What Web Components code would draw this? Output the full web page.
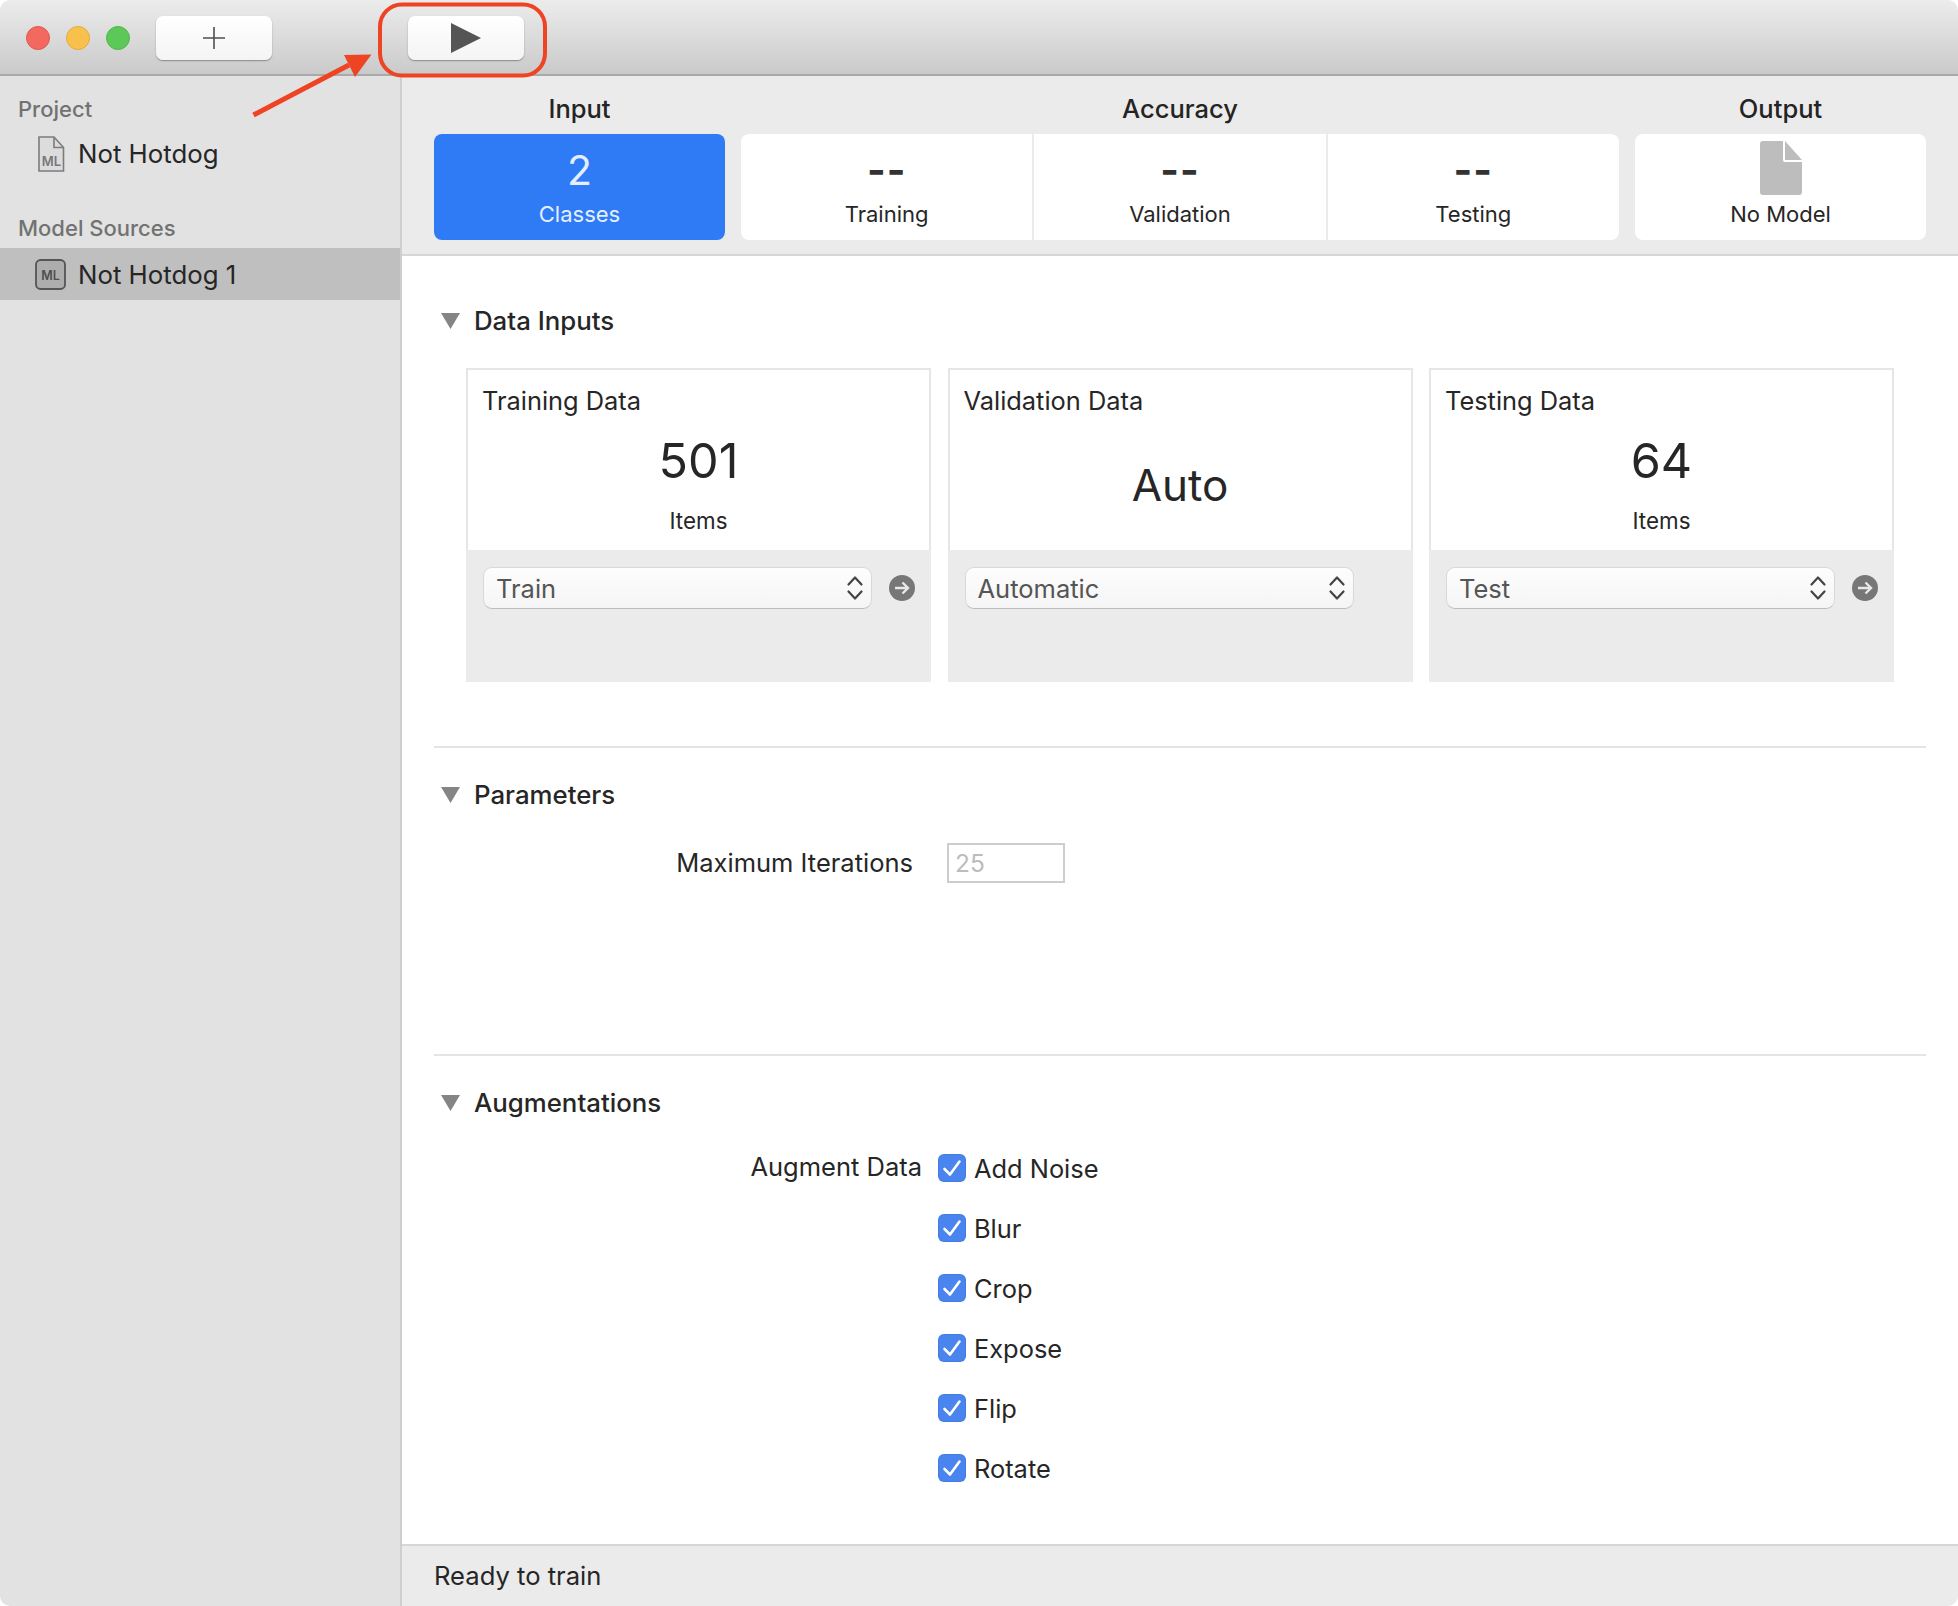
<!DOCTYPE html>
<html><head><meta charset="utf-8"><title>Create ML</title>
<style>
html,body{margin:0;padding:0;background:#fff}
body{font-family:Inter,"Noto Sans","Liberation Sans",sans-serif;color:#262626;width:1958px;height:1606px;overflow:hidden}
</style></head><body>
<app-window>
  <title-bar slot="top"></title-bar>
  <side-bar slot="side">
    <side-label>Project</side-label>
    <side-item icon="doc">Not Hotdog</side-item>
    <side-label style="margin:36px 0 7px">Model Sources</side-label>
    <side-item icon="model" selected>Not Hotdog 1</side-item>
  </side-bar>
  <summary-bar slot="summary"></summary-bar>
  <main-form slot="main">
    <form-section heading="Data Inputs" style="--sec-h:440px">
      <div style="display:grid;grid-template-columns:repeat(3,465px);column-gap:16.5px;margin:32px 0 0 32px">
        <data-card heading="Training Data" value="501" sub="Items" option="Train" go></data-card>
        <data-card heading="Validation Data" value="Auto" option="Automatic"></data-card>
        <data-card heading="Testing Data" value="64" sub="Items" option="Test" go></data-card>
      </div>
    </form-section>
    <form-section heading="Parameters" ruled style="--sec-h:308px">
      <form-row label="Maximum Iterations" style="--lw:479px;--gap:34px;margin-top:33px"><num-field>25</num-field></form-row>
    </form-section>
    <form-section heading="Augmentations" ruled style="--sec-h:489px">
      <form-row label="Augment Data" style="--lw:488px;--gap:16px;--lt:9px;margin-top:20px">
        <check-row>Add Noise</check-row>
        <check-row>Blur</check-row>
        <check-row>Crop</check-row>
        <check-row>Expose</check-row>
        <check-row>Flip</check-row>
        <check-row>Rotate</check-row>
      </form-row>
    </form-section>
  </main-form>
  <status-bar slot="status">Ready to train</status-bar>
  <call-out slot="over"></call-out>
</app-window>
<script>
function def(name, html){
  customElements.define(name, class extends HTMLElement{
    constructor(){super();this.attachShadow({mode:'open'});}
    connectedCallback(){
      const a=n=>this.getAttribute(n);
      this.shadowRoot.innerHTML = typeof html==='function'? html(a,this):html;
    }
  });
}
def('app-window',`<style>
:host{display:block;position:relative;width:1958px;height:1606px}
.win{width:100%;height:100%;display:flex;flex-direction:column;border-radius:10px;overflow:hidden}
.body{flex:1;display:flex;min-height:0}
.col{flex:1;display:flex;flex-direction:column;min-width:0}
</style><div class="win"><slot name="top"></slot><div class="body"><slot name="side"></slot>
<div class="col"><slot name="summary"></slot><slot name="main"></slot><slot name="status"></slot></div></div></div><slot name="over"></slot>`);

def('title-bar',`<style>
:host{display:flex;align-items:center;box-sizing:border-box;height:76px;flex:none;padding:2px 0 0 26px;
background:linear-gradient(#ececec,#cacaca);border-bottom:2px solid #a9a9a9}
.l{width:24px;height:24px;border-radius:50%;box-sizing:border-box;margin-right:16px;border:1px solid}
.b{box-sizing:border-box;width:116px;height:44px;border-radius:7px;background:linear-gradient(#fff,#f4f4f4);
box-shadow:0 1px 1.5px rgba(0,0,0,.35);display:flex;align-items:center;justify-content:center}
</style>
<span class="l" style="background:#f3695f;border-color:#e2574d"></span>
<span class="l" style="background:#f8c04d;border-color:#e6ab3a"></span>
<span class="l" style="background:#5cc858;border-color:#4fb84c;margin-right:0"></span>
<div class="b" style="margin-left:26px"><svg width="22" height="22" viewBox="0 0 22 22"><path d="M11 0V22M0 11H22" stroke="#4f4f4f" stroke-width="1.6" fill="none"/></svg></div>
<div class="b" style="margin-left:136px"><svg width="30" height="30" viewBox="0 0 30 30"><path d="M0 0L30 15L0 30Z" fill="#555"/></svg></div>`);

def('side-bar',`<style>
:host{display:block;box-sizing:border-box;width:402px;flex:none;background:#e2e2e2;border-right:2px solid #cfcfcf;padding-top:20px}
</style><slot></slot>`);
def('side-label',`<style>
:host{display:block;font-size:22px;line-height:26px;font-weight:500;color:#727272;padding-left:18px;margin-bottom:6px}
</style><slot></slot>`);
def('side-item',(a,el)=>{
 const sel=el.hasAttribute('selected');
 const icon=a('icon')==='doc'
 ?`<svg width="30" height="36" viewBox="0 0 30 36" style="margin-left:6px"><path d="M3 1H18L27.5 11.5V35H3Z" fill="#dcdcdc" stroke="#7c7c7c" stroke-width="1.6"/><path d="M18 1V11.5H27.5" fill="none" stroke="#7c7c7c" stroke-width="1.6"/><text x="15.5" y="30" text-anchor="middle" font-family="Inter,sans-serif" font-size="13" font-weight="600" fill="#777">ML</text></svg>`
 :`<svg width="32" height="31" viewBox="0 0 32 31" style="margin-left:5px"><rect x="1" y="1" width="29" height="29" rx="4.5" fill="#adadad" stroke="#555" stroke-width="1.8"/><text x="15.5" y="20.5" text-anchor="middle" font-family="Inter,sans-serif" font-size="12.5" font-weight="600" fill="#4f4f4f">ML</text></svg>`;
 return `<style>
:host{display:flex;align-items:center;height:${sel?52:51}px;box-sizing:border-box;padding-left:30px;font-size:25.8px;color:#262626;background:${sel?'#bfbfbf':'transparent'}}
.w{display:flex;align-items:center;width:48px;flex:none}
</style><span class="w">${icon}</span><slot></slot>`;
});

def('summary-bar',`<style>
:host{display:block;box-sizing:border-box;height:180px;flex:none;background:#ebebeb;border-bottom:2px solid #d6d6d6;padding:18px 32px 0}
.g{display:grid;grid-template-columns:291px 878px 291px;column-gap:16px}
h3{margin:0 0 10px;font-size:25.5px;line-height:30px;font-weight:500;text-align:center;color:#242424}
.c{height:106px;border-radius:8px;background:#fff;display:flex;overflow:hidden}
.blue{background:#2f7bf6;color:#e4eeff}
.cell{flex:1;display:flex;flex-direction:column;align-items:center;position:relative;box-sizing:border-box}
.cell+.cell{border-left:2px solid #ebebeb}
.n{font-size:41px;line-height:48px;margin-top:12px;height:48px}
.d{font-size:40px;line-height:48px;margin-top:12px;height:48px;font-weight:700;letter-spacing:1px;color:#333}
.s{font-size:22px;line-height:28px;position:absolute;top:66px;white-space:nowrap}
svg{margin-top:7px}
</style><div class="g">
<div><h3>Input</h3><div class="c blue"><div class="cell"><span class="n">2</span><span class="s">Classes</span></div></div></div>
<div><h3>Accuracy</h3><div class="c">
<div class="cell"><span class="d">--</span><span class="s">Training</span></div>
<div class="cell"><span class="d">--</span><span class="s">Validation</span></div>
<div class="cell"><span class="d">--</span><span class="s">Testing</span></div>
</div></div>
<div><h3>Output</h3><div class="c"><div class="cell">
<svg width="42" height="54" viewBox="0 0 42 54"><path d="M3 0H23V19Q23 21 25 21H42V51Q42 54 39 54H3Q0 54 0 51V3Q0 0 3 0Z" fill="#bdbdbd"/><path d="M25 0L42 19H25Z" fill="#bdbdbd"/></svg>
<span class="s">No Model</span></div></div></div>
</div>`);

def('main-form',`<style>
:host{display:block;flex:1;background:#fff;min-height:0;box-sizing:border-box;padding:50px 32px 0}
</style><slot></slot>`);
def('form-section',(a,el)=>`<style>
:host{display:block;box-sizing:border-box;height:var(--sec-h);${el.hasAttribute('ruled')?'border-top:2px solid #e4e4e4;padding-top:32px;':''}}
.h{display:flex;align-items:center;height:30px;font-size:25.8px;font-weight:500;color:#262626;line-height:30px}
svg{margin:0 14px 0 7px;flex:none}
</style><div class="h"><svg width="19" height="16" viewBox="0 0 19 16"><path d="M0 0H19L9.5 16Z" fill="#858585"/></svg><span>${a('heading')}</span></div><slot></slot>`);

def('data-card',(a,el)=>{
 const sub=a('sub');
 const go=el.hasAttribute('go');
 return `<style>
:host{display:block;height:314px}
.top{height:182px;box-sizing:border-box;border:2px solid #e6e6e6;border-bottom:none;padding:16px 14px 0;background:#fff}
.t{line-height:30px;height:30px;font-size:25.4px;color:#262626}
.v{font-size:${sub?48.5:44}px;line-height:56px;text-align:center;margin-top:${sub?17:41}px;color:#262626}
.s{font-size:22.4px;line-height:28px;text-align:center;margin-top:18px;color:#262626}
.bot{height:132px;background:#ebebeb;box-sizing:border-box;padding:17px 0 0 17px;display:flex;align-items:flex-start}
.sel{box-sizing:border-box;width:389px;height:42px;border-radius:9px;background:linear-gradient(#fdfdfd,#f5f5f5);border:1px solid #d8d8d8;border-bottom-color:#bdbdbd;
display:flex;align-items:center;padding:0 7px 0 12px;font-size:25.5px;color:#555;justify-content:space-between}
.go{margin:8px 0 0 17px;flex:none}
</style><div class="top"><div class="t">${a('heading')}</div><div class="v">${a('value')}</div>${sub?`<div class="s">${sub}</div>`:''}</div>
<div class="bot"><div class="sel"><span>${a('option')}</span><svg width="18" height="28" viewBox="0 0 18 28"><path d="M2.5 10.5L9 3.5L15.5 10.5M2.5 17.5L9 24.5L15.5 17.5" fill="none" stroke="#444" stroke-width="2.2" stroke-linecap="round" stroke-linejoin="round"/></svg></div>
${go?`<svg class="go" width="26" height="26" viewBox="0 0 26 26"><circle cx="13" cy="13" r="13" fill="#777"/><path d="M6 13H19M13.5 7.5L19 13L13.5 18.5" fill="none" stroke="#e8e8e8" stroke-width="2.4"/></svg>`:''}</div>`;
});

def('form-row',(a)=>`<style>
:host{display:grid;grid-template-columns:var(--lw) 1fr;column-gap:var(--gap);align-items:start}
.l{text-align:right;font-size:25.5px;line-height:40px;color:#262626;white-space:nowrap;padding-top:var(--lt,0)}
</style><div class="l">${a('label')}</div><div><slot></slot></div>`);

def('num-field',`<style>
:host{display:block;box-sizing:border-box;width:118px;height:40px;border:2px solid #cdcdcd;background:#fff;color:#bcbcbc;font-size:24.5px;line-height:36px;padding-left:6px}
</style><slot></slot>`);

def('check-row',`<style>
:host{display:flex;align-items:center;height:60px;font-size:25.4px;color:#262626}
.b{width:28px;height:28px;border-radius:6px;background:#4a84ee;margin-right:8px;flex:none;display:block;box-shadow:inset 0 0 0 1px rgba(0,40,140,.08)}
svg{display:block}
</style><span class="b"><svg width="28" height="28" viewBox="0 0 28 28"><path d="M6.5 15L12 20.5L21.5 7.5" fill="none" stroke="#fff" stroke-width="2.6" stroke-linecap="round" stroke-linejoin="round"/></svg></span><span><slot></slot></span>`);

def('status-bar',`<style>
:host{display:flex;align-items:center;box-sizing:border-box;height:62px;flex:none;background:#ebebeb;border-top:2px solid #d6d6d6;padding:0 0 2px 32px;font-size:25.6px;color:#262626}
</style><slot></slot>`);

def('call-out',`<style>
:host{position:absolute;left:0;top:0;display:block;pointer-events:none}
svg{display:block}
</style><svg width="560" height="130" viewBox="0 0 560 130">
<rect x="380" y="4.5" width="165" height="71" rx="22" fill="none" stroke="#ee4423" stroke-width="4"/>
<path d="M253.5 115L349 65" stroke="#ee4423" stroke-width="5" fill="none"/>
<path d="M371.5 54.5L344 55L355 77Z" fill="#ee4423"/>
</svg>`);
</script>
</body></html>
